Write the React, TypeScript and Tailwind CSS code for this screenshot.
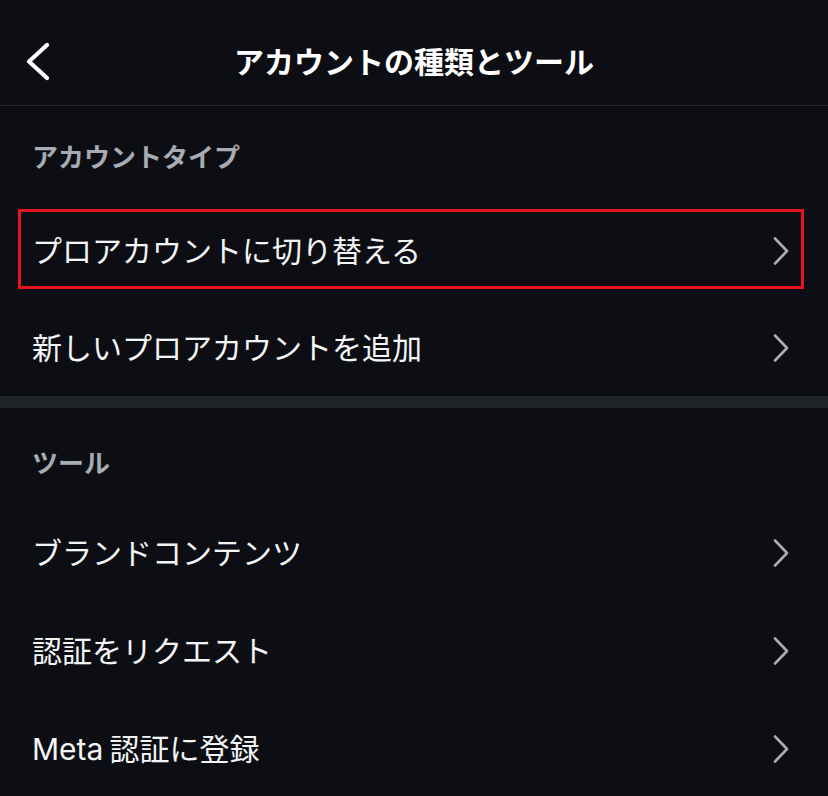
import React from "react";

const font = { fontFamily: 'Inter, "Noto Sans CJK JP", "Noto Sans", sans-serif' };

function Chevron() {
  return (
    <svg width="18" height="30" viewBox="0 0 18 30" className="shrink-0">
      <path d="M3 2.5 L15 15 L3 27.5" fill="none" stroke="#a9adb3" strokeWidth="2.6" strokeLinecap="round" strokeLinejoin="round" />
    </svg>
  );
}

function Row({ label, h = "h-[98px]", highlight = false }: { label: React.ReactNode; h?: string; highlight?: boolean }) {
  return (
    <div className={`relative flex items-center justify-between pl-[32px] pr-[38px] ${h}`}>
      <span className="text-[30px] leading-[36px] text-[#f4f5f6] font-normal">{label}</span>
      <Chevron />
      {highlight && (
        <div className="pointer-events-none absolute left-[18px] right-[24px] top-[7px] bottom-[11px] border-[3px] border-[#e3141b]" />
      )}
    </div>
  );
}

export default function App() {
  return (
    <div className="w-[828px] h-[796px] overflow-hidden bg-[#0c0e13]" style={font}>
      <div className="relative flex h-[106px] justify-center border-b border-[#26292e] pt-[42px]">
        <svg width="30" height="44" viewBox="0 0 30 44" className="absolute left-[23px] top-[40px]">
          <path d="M24 5 L6 21.5 L24 38" fill="none" stroke="#ffffff" strokeWidth="4.2" strokeLinecap="round" strokeLinejoin="round" />
        </svg>
        <h1 className="text-[30px] font-bold leading-[40px] text-white">アカウントの種類とツール</h1>
      </div>

      <div className="h-[96px] pt-[36px] pl-[32px]">
        <span className="text-[26px] font-bold leading-[32px] text-[#a7abb2]">アカウントタイプ</span>
      </div>
      <Row label="プロアカウントに切り替える" highlight />
      <Row label="新しいプロアカウントを追加" h="h-[96px]" />

      <div className="h-[12px] bg-[#202327]" />

      <div className="h-[96px] pt-[40px] pl-[32px]">
        <span className="text-[26px] font-bold leading-[32px] text-[#a7abb2]">ツール</span>
      </div>
      <Row label="ブランドコンテンツ" />
      <Row label="認証をリクエスト" />
      <Row
        label={
          <>
            Meta<span className="ml-[6px]">認証に登録</span>
          </>
        }
      />
    </div>
  );
}
